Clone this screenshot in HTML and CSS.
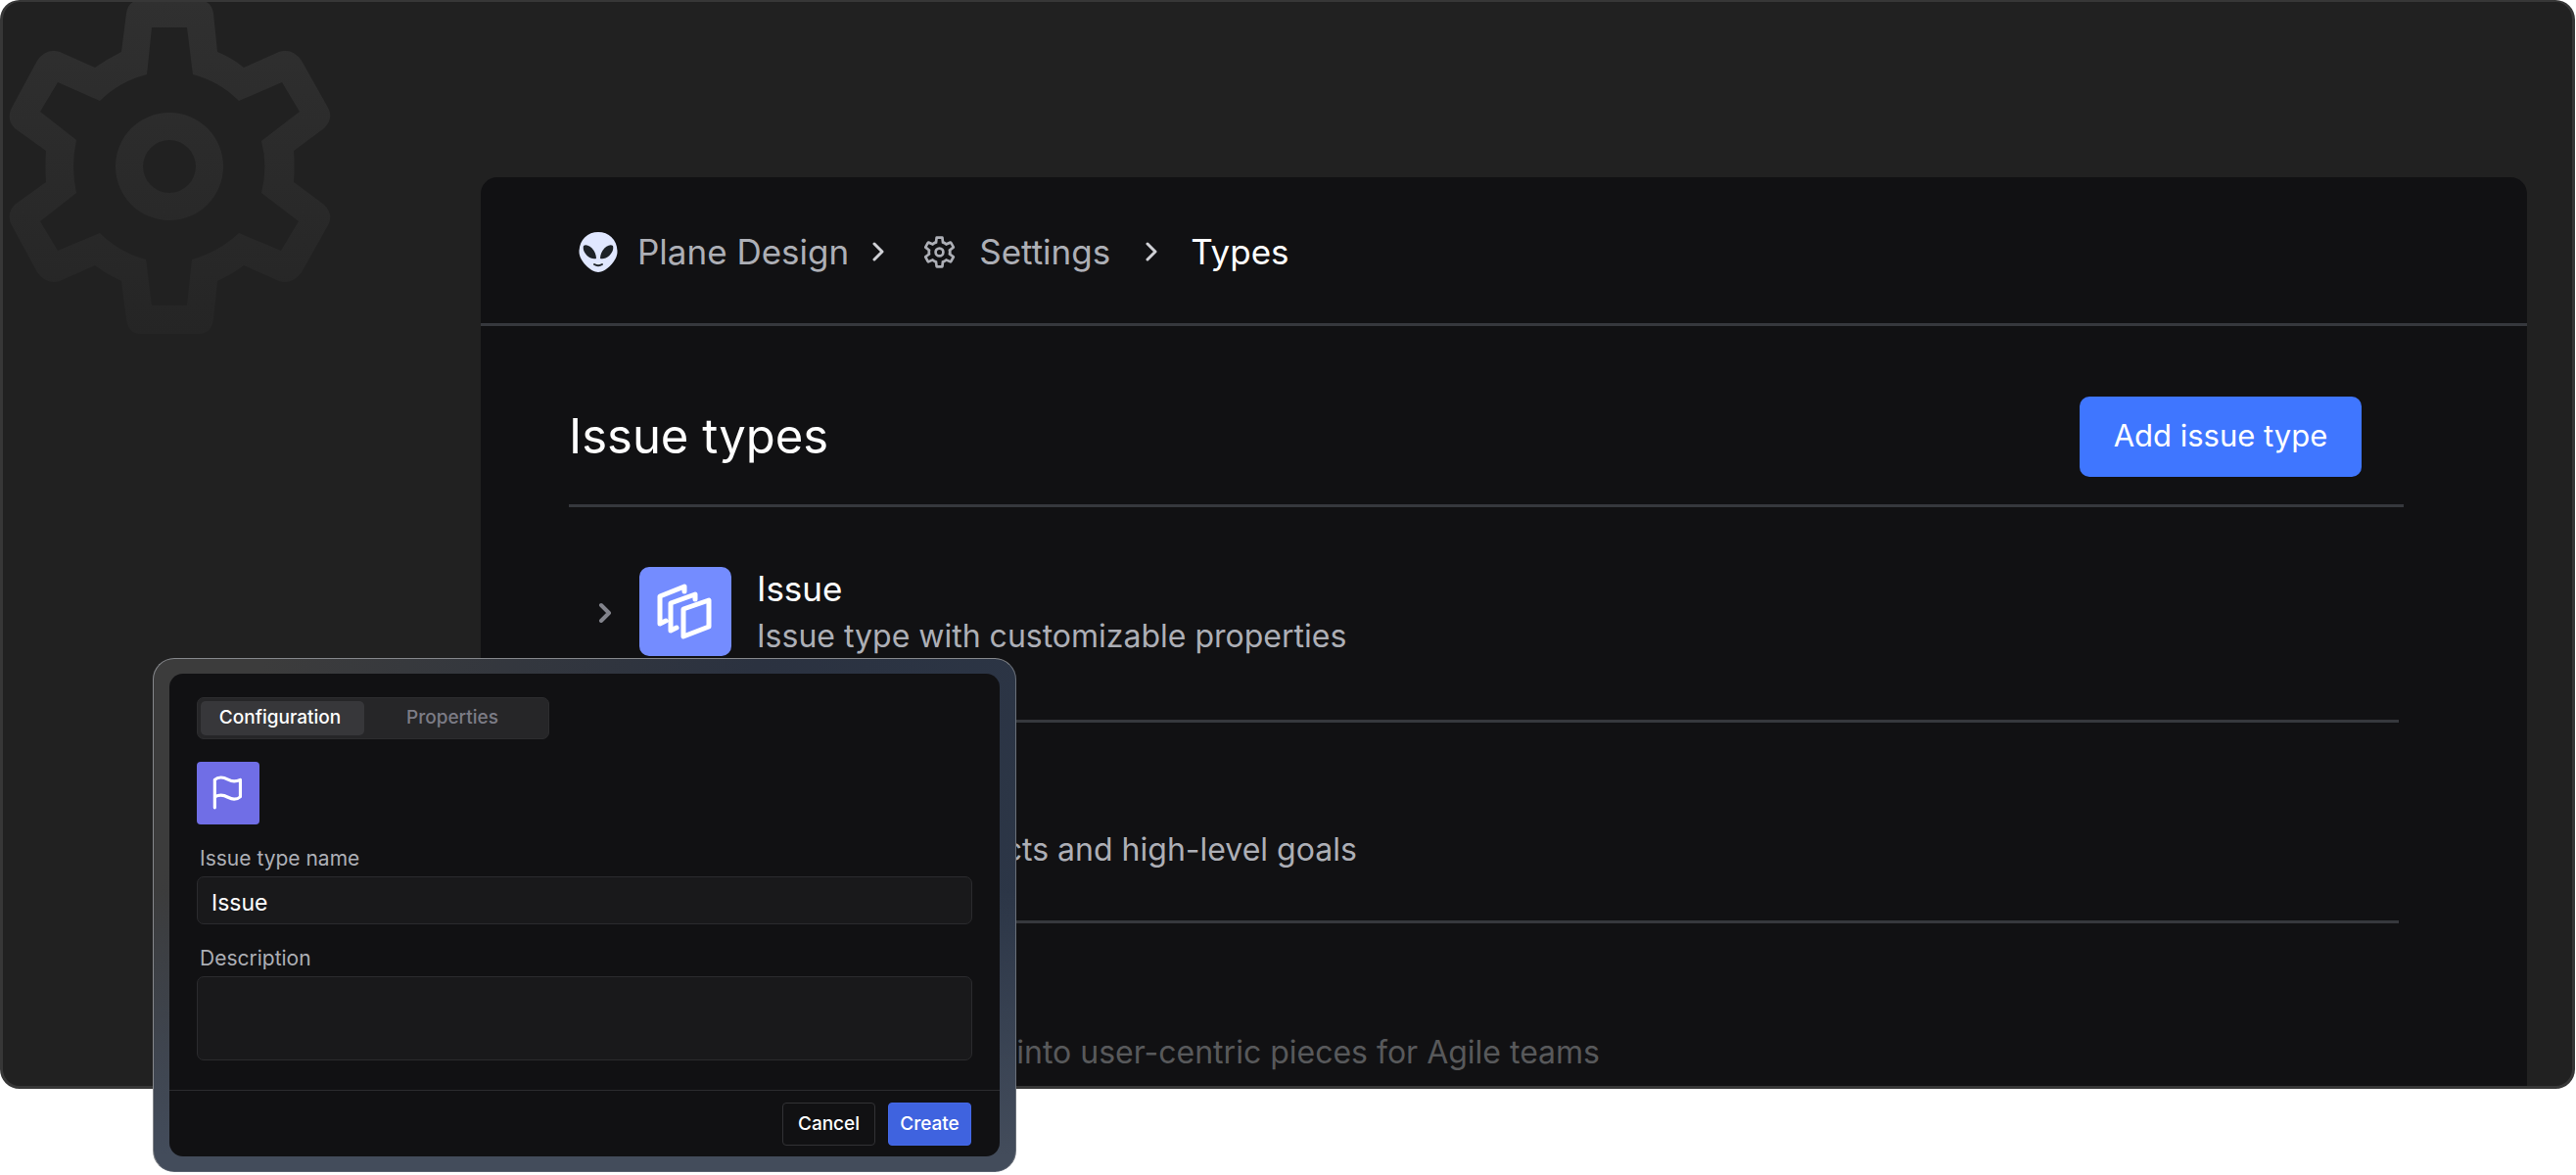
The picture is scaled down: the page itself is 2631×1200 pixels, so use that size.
FILE: index.html
```html
<!DOCTYPE html>
<html lang="en">
<head>
<meta charset="utf-8">
<title>Issue types</title>
<link rel="stylesheet" href="styles.css">
</head>
<body>
<svg class="defs" aria-hidden="true">
  <linearGradient id="gear-fade" x1="0" y1="0" x2="0" y2="1">
    <stop offset="0" stop-color="#303030"/>
    <stop offset="1" stop-color="#252525"/>
  </linearGradient>
  <symbol id="gear" viewBox="0 0 346 341">
    <path fill-rule="evenodd" d="M124 53L129 14Q131 0 144 0H202Q216 0 218 14L222 53Q237 59 249 69L285 53Q299 49 308 62L335 110Q341 121 331 131L300 154Q301 170 300 186L331 209Q341 219 335 230L308 278Q299 291 285 287L249 271Q237 280 222 287L218 326Q216 341 202 341H144Q131 341 129 326L124 287Q109 280 97 271L61 287Q47 291 38 278L12 230Q6 219 15 209L47 186Q46 170 47 154L15 131Q6 121 12 110L38 62Q47 49 61 53L97 69Q110 60 124 53Z
    M155 28L150 76Q122 83 102 103L59 84L41 114L78 143Q72 170 78 197L41 226L59 256L102 238Q122 258 149 265L155 312H191L196 265Q224 257 244 238L287 256L305 226L267 197Q274 170 267 144L306 114L288 84L244 103Q224 83 197 76L191 28Z
    M173 115A55 55 0 1 0 173 225A55 55 0 1 0 173 115ZM173 143A27 27 0 1 1 173 197A27 27 0 1 1 173 143Z"/>
  </symbol>
</svg>
<main class="stage">
  <div class="card">
    <svg class="backdrop-gear" viewBox="0 0 346 341" aria-hidden="true"><use href="#gear" fill="url(#gear-fade)"/></svg>
    <section class="panel">
      <nav class="crumbs" aria-label="Breadcrumb">
        <a class="crumb" href="#">
          <svg class="alien" viewBox="0 0 40 41" aria-hidden="true">
            <path fill="#e0e7ff" d="M20 0C31 0 39.500 8 39.500 20C39.500 30 27 41 20 41C13 41 .5 30 .5 20C.5 8 9 0 20 0Z"/>
            <path fill="#1d2227" d="M5 14C9 11 18 18 18 27C12 29 3 21 5 14ZM35 14C31 11 22 18 22 27C28 29 37 21 35 14Z"/>
            <path fill="none" stroke="#1d2227" stroke-width="2" stroke-linecap="round" d="M16 33Q20 35.500 24 33"/>
          </svg>
          Plane Design
        </a>
        <svg class="sep" viewBox="0 0 12 20" aria-hidden="true"><path d="M2 2L10 10L2 18"/></svg>
        <a class="crumb crumb-settings" href="#">
          <svg class="gear-icon" aria-hidden="true"><use href="#gear" fill="currentColor"/></svg>
          Settings
        </a>
        <svg class="sep" viewBox="0 0 12 20" aria-hidden="true"><path d="M2 2L10 10L2 18"/></svg>
        <span class="crumb-current" aria-current="page">Types</span>
      </nav>
      <div class="body">
        <header class="head">
          <h1>Issue types</h1>
          <button class="add" type="button">Add issue type</button>
        </header>
        <ul class="types">
          <li class="type">
            <svg class="expand" viewBox="0 0 14 22" aria-hidden="true"><path d="M3 4L11 12L3 20"/></svg>
            <span class="tile">
              <svg viewBox="0 0 94 91" aria-hidden="true"><path d="M46 25V20L21 30V58L27 55M57 33V28L32 37V65L38 62M71 34V61L45 71V43Z"/></svg>
            </span>
            <div class="type-text">
              <h2>Issue</h2>
              <p>Issue type with customizable properties</p>
            </div>
          </li>
          <li class="type type-plain"><p>Epics track projects and high-level goals</p></li>
          <li class="type type-plain type-faded"><p>Split bigger work into user-centric pieces for Agile teams</p></li>
        </ul>
      </div>
    </section>
  </div>

  <div class="modal-frame">
    <form class="modal" role="dialog" aria-label="Issue type">
      <div class="fields">
        <div class="tabs" role="tablist">
          <button class="tab active" type="button" role="tab" aria-selected="true">Configuration</button>
          <button class="tab" type="button" role="tab" aria-selected="false">Properties</button>
        </div>
        <button class="flag" type="button" aria-label="Choose icon">
          <svg viewBox="0 0 24 24" aria-hidden="true"><path d="M4 22V4C5 3 6 2.500 8 2.500C12 2.500 13 5 16.500 5C18.500 5 19.500 4.500 20.500 4V15C19.500 16 18 16.500 16.500 16.500C13 16.500 12 14 8 14C6 14 5 14.500 4 15"/></svg>
        </button>
        <label for="name">Issue type name</label>
        <input id="name" type="text" value="Issue">
        <label for="description">Description</label>
        <textarea id="description"></textarea>
      </div>
      <footer class="actions">
        <button class="cancel" type="button">Cancel</button>
        <button class="create" type="button">Create</button>
      </footer>
    </form>
  </div>
</main>
</body>
</html>
```
FILE: styles.css
```css
* { box-sizing: border-box; }

body {
  margin: 0;
  background: #fff;
  font-family: Inter, "Liberation Sans", sans-serif;
  color: #fff;
}

h1, h2, p, ul { margin: 0; padding: 0; font-weight: 400; }
ul { list-style: none; }
button, input, textarea { font: inherit; margin: 0; }
svg { display: block; flex: none; }
.defs { position: absolute; width: 0; height: 0; }

.stage { position: relative; padding-bottom: 88px; }

.card {
  position: relative;
  margin-right: 1px;
  padding: 179px 46px 0 488px;
  border: 3px solid #373737;
  border-top-width: 2px;
  border-radius: 20px;
  background: #212121;
  overflow: hidden;
}

.backdrop-gear {
  position: absolute;
  top: -2px;
  left: -3px;
  width: 346px;
  height: 341px;
}

.panel { background: #111113; border-radius: 17px 17px 0 0; }

.crumbs {
  display: flex;
  align-items: center;
  height: 152px;
  padding: 3px 100px 0;
  border-bottom: 3px solid #36383d;
  font-size: 35px;
  line-height: 44px;
}
.crumb { display: flex; align-items: center; gap: 20px; color: #adafb6; text-decoration: none; }
.crumb-settings { gap: 24px; margin-left: 40px; }
.crumb-current { margin-left: 34px; }
.alien { width: 40px; height: 41px; }
.gear-icon { width: 33px; height: 33px; }
.sep { width: 12px; height: 20px; margin-left: 24px; }
.crumb-settings + .sep { margin-left: 36px; }
.sep path, .expand path { fill: none; stroke: #d0d1d6; stroke-width: 3; stroke-linecap: round; stroke-linejoin: round; }

.body { padding: 0 126px 0 90px; }
.head {
  display: flex;
  justify-content: space-between;
  align-items: center;
  height: 185px;
  padding: 72px 43px 28px 0;
  border-bottom: 3px solid #36383d;
}
h1 { font-size: 49px; line-height: 60px; }
.add {
  width: 288px;
  height: 82px;
  padding: 0 0 4px;
  border: 0;
  border-radius: 10px;
  background: #3f76ff;
  color: #fff;
  font-size: 31px;
}

.types { margin-right: 5px; }
.type {
  display: flex;
  align-items: center;
  height: 220px;
  padding: 61px 0 65px 30px;
  border-bottom: 3px solid #36383d;
}
.expand { width: 14px; height: 22px; }
.expand path { stroke: #83848c; stroke-width: 4; }
.tile { margin-left: 28px; background: #748cff; border-radius: 10px; }
.tile svg { width: 94px; height: 91px; }
.tile path { fill: none; stroke: #fff; stroke-width: 5; stroke-linecap: round; stroke-linejoin: round; }
.type-text { display: flex; flex-direction: column; gap: 7px; margin-left: 26px; }
h2 { font-size: 35px; line-height: 44px; }
.type p { font-size: 32px; line-height: 40px; color: #adafb6; white-space: nowrap; }
.type-plain { height: 205px; padding: 110px 0 52px 192px; }
.type-faded { height: 166px; padding: 112px 0 14px 192px; border: 0; }
.type-faded p { color: #58595b; }

.modal-frame {
  position: absolute;
  top: 672px;
  left: 156px;
  width: 882px;
  padding: 15px 16px;
  border: 1px solid #85878b;
  border-color: #85878b #6a7079 #5d6472 #85878b;
  border-radius: 22px;
  background:
    linear-gradient(to bottom, transparent 45%, #434c5b 97%),
    linear-gradient(115deg, #3c3c3c 10%, #2b3240 55%, #2c3749 100%);
}
.modal { background: #111113; border-radius: 14px; }
.fields { display: flex; flex-direction: column; align-items: flex-start; padding: 24px 28px 30px; }

.tabs { display: flex; width: 360px; height: 43px; padding: 3px; border: 1px solid #2d2d2f; border-radius: 7px; background: #262628; }
.tab { width: 167px; padding: 0 5px 2px 0; border: 0; border-radius: 5px; background: none; color: #7c7c86; font-size: 19px; font-weight: 500; }
.tab + .tab { width: 185px; }
.tab.active { background: #37373a; color: #fff; }

.flag {
  display: flex;
  align-items: center;
  justify-content: center;
  width: 64px;
  height: 64px;
  margin: 23px 0 20px;
  padding: 0 2px 2px 0;
  border: 0;
  border-radius: 4px;
  background: #706ee6;
}
.flag svg { width: 38px; height: 38px; }
.flag path { fill: none; stroke: #fff; stroke-width: 2; stroke-linecap: round; stroke-linejoin: round; }

label { padding-left: 3px; font-size: 21px; line-height: 30px; color: #adafb6; }
input, textarea {
  width: 100%;
  margin-top: 3px;
  border: 1px solid #2b2b2e;
  border-radius: 7px;
  background: #19191b;
  color: #fff;
  font-size: 23px;
}
input { height: 49px; margin-bottom: 20px; padding: 4px 14px 0; }
textarea { height: 86px; padding: 8px 14px; resize: none; }

.actions { display: flex; justify-content: flex-end; gap: 13px; padding: 12px 29px 11px; border-top: 1px solid #2b2b2e; }
.actions button { height: 44px; border-radius: 4px; font-size: 19px; font-weight: 500; color: #fff; padding: 0 0 2px; }
.actions .cancel { width: 95px; border: 1px solid #323235; background: none; }
.actions .create { width: 85px; border: 1px solid #4468e6; background: #3f63df; }
```
